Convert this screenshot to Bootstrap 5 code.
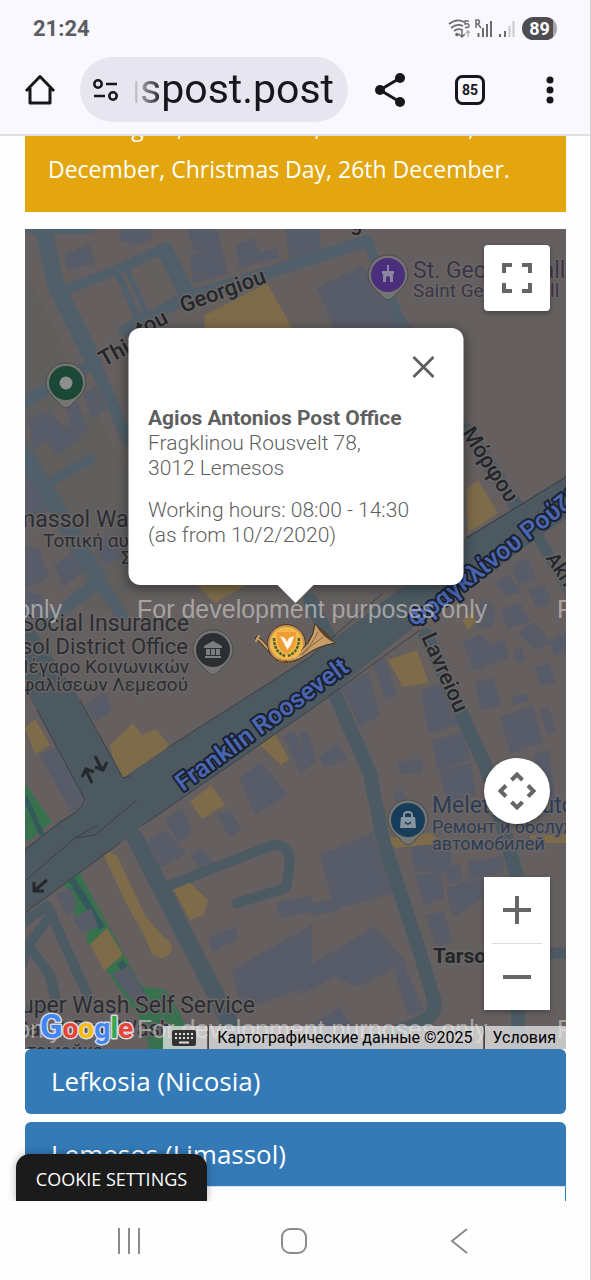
<!DOCTYPE html>
<html lang="en">
<head>
<meta charset="utf-8">
<meta name="viewport" content="width=device-width, initial-scale=1">
<title>Post offices</title>
<link href="https://cdn.jsdelivr.net/npm/bootstrap@5.3.0/dist/css/bootstrap.min.css" rel="stylesheet">
<style>
  body { font-family: "Open Sans", sans-serif; background: #fefefe; }
  .phone { height: 100vh; border-right: 1px solid #d3d3d6; }
  .chrome-top { background: #f9f8fe; border-bottom: 2px solid #e0e0e4; font-family: Roboto, sans-serif; }
  .status-row { height: 57px; padding: 0 33px; color: #5c5c61; font-size: 22px; }
  .battery { width: 35px; height: 23px; font-size: 18px; color: #fff; background: linear-gradient(90deg, #4d4d52 88%, #a5a5aa 88%); }
  .tool-row { height: 77px; }
  .tool-btn { width: 80px; height: 66px; color: #17161c; flex-shrink: 0; }
  .url-pill { height: 65px; background: #e7e5ef; margin-right: 2px; padding: 0 14px 0 12px; min-width: 0; }
  .url-text { font-size: 41px; line-height: 65px; color: #17161c; width: 0; min-width: 0; outline: 0;
    -webkit-mask-image: linear-gradient(90deg, rgba(0,0,0,.15), #000 28px); mask-image: linear-gradient(90deg, rgba(0,0,0,.15), #000 28px); }
  .plain-btn { border: 0; background: none; padding: 0; display: flex; align-items: center; justify-content: center; }
  .page-view { padding: 0 24px 0 25px; min-height: 0; }
  .notice { background: #e3a60f; color: #fff; font-size: 23px; line-height: 42px; padding: 0 23px 22px; margin-bottom: 17px; }
  .notice p { margin-top: -30px; }
  .office-map { height: 820px; background: #655f5f; font-family: Roboto, sans-serif; flex-shrink: 0; }
  .info-window { top: 99px; width: 335px; height: 257px; border-radius: 12px; padding: 78px 20px 20px; color: #5f5f5f;
    font-size: 21px; line-height: 25px; font-weight: 300; box-shadow: 0 3px 12px 1px rgba(0,0,0,.4); }
  .info-window::after { content: ""; position: absolute; left: 50%; bottom: -18px; margin-left: -19px;
    border: solid transparent; border-width: 19px 19px 0; border-top-color: #fff; }
  .info-window p { margin-bottom: 17px; }
  .info-window strong { font-weight: 700; }
  .info-close { top: 19px; right: 20px; width: 40px; height: 40px; }
  .map-ctl { right: 16px; width: 66px; box-shadow: 0 2px 5px rgba(0,0,0,.3); background: #fff; }
  .ctl-full { top: 16px; height: 66px; border-radius: 4px; }
  .ctl-pan { bottom: 225px; height: 66px; }
  .ctl-zoom { bottom: 39px; }
  .ctl-zoom button { height: 66px; }
  .ctl-zoom hr { margin: 0 8px; border-color: #ddd; opacity: 1; }
  .credits { height: 23px; font-size: 16px; line-height: 23px; color: #000; gap: 1px; }
  .credits > * { background: rgba(236,236,236,.72); height: 23px; color: #000; padding: 0 10px 0 8px; }
  .credits > * + * { border-left: 1px solid #444; }
  .glogo { left: 14px; bottom: 2px; }
  .region-btn { height: 65px; font-size: 26px; color: #fff; background: #337ab7; border-radius: 6px; padding: 0 26px; flex-shrink: 0; justify-content: flex-start; }
  .region-btn[aria-expanded] { height: 64px; border-radius: 6px 6px 0 0; }
  .region-body { border: 1px solid #337ab7; min-height: 60px; border-top-color: #cfe0ef; flex-shrink: 0; }
  .cookie-btn { left: 16px; bottom: 0; width: 191px; height: 47px; padding: 3px 0 0; color: #fff; background: #1b1b1b; font-size: 18px; font-weight: 500; white-space: nowrap;
    border-radius: 14px 14px 0 0; box-shadow: 0 0 8px rgba(0,0,0,.3); }
  .sys-nav { height: 79px; padding: 0 49px 0 46px; color: #8b8b8b; }
  .road { fill: none; stroke: #4c5a63; stroke-linejoin: round; stroke-linecap: round; }
  .hi { stroke: #505f69; }
  .bld { fill: #585b68; }
  .shop { fill: #7d6b49; }
  .park { fill: #38714d; }
  .edge { fill: none; stroke: #3b4145; stroke-width: 1; }
  .halo { paint-order: stroke; stroke: #6b6665; stroke-width: 3px; stroke-linejoin: round; }
  .street { font-weight: 500; fill: #23262b; }
  .avenue { font-weight: 600; fill: #4a66b0; stroke: #1b2130; stroke-width: 4px; paint-order: stroke; stroke-linejoin: round; }
  .poi { fill: #2a2e34; }
  .devnote { font-family: "Liberation Sans", sans-serif; font-size: 25px; fill: #b9b7b6; fill-opacity: .8; }
</style>
</head>
<body>
<div class="phone d-flex flex-column overflow-hidden">
  <header class="chrome-top flex-shrink-0">
    <div class="status-row d-flex align-items-center justify-content-between">
      <span class="fw-bold">21:24</span>
      <span class="d-flex align-items-center">
        <svg width="70" height="24" viewBox="448 17 70 24" fill="none" stroke="#6b6b70" stroke-width="1.7">
          <path d="M449 24q8-6 15-2M451 28q6-5 12-2M454 31q4-3 8-1"/><circle cx="457" cy="34.500" r="1" fill="#6b6b70"/>
          <path d="M469 21h-4v3q4-1 4 1.500t-4 2" stroke-width="1.500"/>
          <path d="M462 29v8m-3-3 3 3 3-3" stroke-width="1.500"/><path d="M468 37v-6m-2 2 2-2 2 2" stroke="#aaa" stroke-width="1.300"/>
          <path d="M476 28v-8h2.500q2 2 0 4H476m2 0 3 4" stroke-width="1.500"/>
          <path d="M478.500 33v4M483 28v9M487 24v13M491 21v16" stroke-width="2"/>
          <path d="M500 34v3M505 31v6" stroke-width="2"/><path d="M509.500 26v11M513.500 21v16" stroke="#c9c9cd" stroke-width="2"/>
        </svg>
        <span class="battery rounded-pill fw-bold d-flex align-items-center justify-content-center ms-1">89</span>
      </span>
    </div>
    <div class="tool-row d-flex align-items-start">
      <button class="plain-btn tool-btn" aria-label="Home"><svg width="32" height="34" viewBox="0 0 32 34" fill="none" stroke="currentColor" stroke-width="3"><path d="M2 18 16 3.500 30 18M6 15v15h20V15" stroke-linejoin="round"/></svg></button>
      <div class="url-pill rounded-pill d-flex align-items-center flex-grow-1">
        <svg class="flex-shrink-0 me-3" width="27" height="24" viewBox="0 0 27 24" fill="none" stroke="#17161c" stroke-width="2.500"><circle cx="6" cy="6" r="3.700"/><path d="M14 6h11M2 18h11"/><circle cx="21" cy="18" r="3.700"/></svg>
        <input class="url-text flex-grow-1 border-0 bg-transparent p-0" dir="rtl" aria-label="Address" value="cypruspost.post">
      </div>
      <button class="plain-btn tool-btn" aria-label="Share"><svg width="32" height="36" viewBox="0 0 32 36" fill="currentColor"><path d="M26 6 6 18l20 12" fill="none" stroke="currentColor" stroke-width="3"/><circle cx="26" cy="6" r="5"/><circle cx="6" cy="18" r="5"/><circle cx="26" cy="30" r="5"/></svg></button>
      <button class="plain-btn tool-btn" aria-label="85 tabs"><svg width="32" height="32" viewBox="0 0 32 32"><rect x="2.500" y="2.500" width="27" height="27" rx="6" fill="none" stroke="currentColor" stroke-width="3"/><text x="16" y="21" font-size="14" font-weight="700" text-anchor="middle" fill="currentColor">85</text></svg></button>
      <button class="plain-btn tool-btn" aria-label="Menu"><svg width="10" height="32" viewBox="0 0 10 32" fill="currentColor"><circle cx="5" cy="6" r="3.500"/><circle cx="5" cy="16" r="3.500"/><circle cx="5" cy="26" r="3.500"/></svg></button>
    </div>
  </header>

  <main class="page-view position-relative flex-grow-1 overflow-hidden d-flex flex-column">
    <div class="notice flex-shrink-0"><p class="mb-0">15th August, 1st October, 28th October, 24th December, Christmas Day, 26th December.</p></div>

    <section class="office-map position-relative overflow-hidden">
      <svg class="position-absolute w-100 h-100" viewBox="25 229 541 820" preserveAspectRatio="xMidYMid slice">
        <rect x="-200" y="229" width="1200" height="820" fill="#655f5f"/>
        <path d="M25 275 60 340 75 395 25 430zM25 440l70-30 35 70v120H90L40 490zM70 590l60-20v40H85z" fill="#605f5e"/>
        <!-- buildings -->
        <g class="bld">
          <path d="M64 255l25-11 6 20-28 6zM120 229h32v10l-18 7-14-6zM187 229h30l4 14-27 8zM190 255l30-15 8 34-35 10zM236 245l18-7 5 14 17-4 3 10-40 10zM285 229h35v25l-30 6zM83 393l13-7 10 24-14 8zM28 420l22-10 14 20-30 20zM64 405l14-3 10 30-12 4zM25 470l12 12 10 32-22 10zM45 440l25-15 12 12-25 18zM54 565l22-16 8 20-20 18zM92 545l24-14 14 22-25 12zM25 545l14 4 10 28-24 12zM26 590l16 6 6 22-22 4z"/>
          <path d="M317 288l45-22 22 30 30 32h-80z"/>
          <path d="M85 705l20-14 7 20-18 10zM40 755l18-9 28 58-15 8zM242 775l20-12 26 32-33 20-15-36zM283 735l12-4 14 34-9 8zM165 820l17-12 10 24-14 10zM148 840l18-10 20 24-26 14zM190 855l12-7 12 15-13 9zM218 815l12-5 11 20-12 7z"/>
          <path d="M340 685l28-12 12 42-20 12zM373 662l12-4 12 36-12 6zM422 690l30-10 8 45-32 8zM432 740l33-8 5 28-32 10zM398 762l24-3v14l-22 1zM440 770l32-7 4 32-30 8zM463 642l18-8 8 10 16-4 3 17-34 14zM475 682l18-5 8 28-20 5zM500 717l33-12 10 37-32 12zM512 698l15-5 1 8-15 5zM513 650l8-2 5 12-8 3zM535 667l14-4 7 19-15 4zM519 634l20-8 12 18-15 6zM550 640l16-8v20l-12 4zM540 710l9-2 7 24-9 3zM533 755l16-5 7 50-12 6zM318 757l20-14 9 17-22 8zM300 730l10 6 6 25-12 10zM394 793l9-2 2 9-10 2z"/>
          <path d="M512 565l16-6 8 20-18 6zM495 582l14-7 12 17-14 5zM528 590l16-6 8 18-15 6zM500 610l20-7 10 18-22 8zM480 600l15 5-2 20-15 5zM520 630l14-8 6 12-13 8z"/>
          <path d="M320 855l52-22 22 60-60 16zM310 965l65-38 32 35-50 25-22-10-35 18v-25zM394 970l10-5 20 45-16 6zM411 845l40 2v26l-37-2zM415 875l25-3 5 25-22 8zM445 868l15-4 2 18-14 2zM468 862l35-6 1 16-35 7zM446 888l37-11v20l-30 20zM425 916l18-5 10 30-16 6zM232 970l80-45v60l-70 25zM276 902l36-6v16l-32 6zM208 938l27-11 4 11-26 14zM312 903l25-5 3 12-28 6zM310 1025l30-18 25 40h-50z"/>
        </g>
        <!-- shops and landmarks -->
        <g class="shop">
          <path d="M205 315l62-32 27 48h-90zM466 490l12-10 20 33-30 20zM195 583h55l-35 20zM110 745l23-22 9 12 14-6 18 22-30 25-13-1-12 10zM25 728l10-9 15 26-15 9zM190 802l21-17 14 20-23 14zM260 745l15-11 14 25-8 6zM388 660l29-10 12 33-26 4zM101 850l15 4 30 63 18 20q12 8 6 17-9 8-18 0l-8-19-17-30zM174 890l13-10 21 20-4 15-14 5zM385 838l45-5 15 10-50 5zM530 835h36v8h-36zM462 620l10-8 4 10-8 8z"/>
        </g>
        <path class="park" d="M25 783 52 822 30 840H25zM62 880l18-6 61 112 24 4 8 10 20 42-30 18h-10l-12-40-55-80 3-15-18-14 5-5z"/>
        <path d="M72 880 102 928M120 962l22 32" stroke="#35585c" stroke-width="7"/>
        <path class="shop" d="M90 944l17-16 16 27-19 16z"/>
        <path class="bld" d="M56 895l16-7 5 20-10 7zM73 918l18-10 7 18-15 8zM112 974l16-8 22 36-12 6z"/>
        <path d="M25 797 42 835" stroke="#35585c" stroke-width="5"/>

        <!-- side streets -->
        <path class="road hi" stroke-width="17" d="M42 225 57 288 92 358M20 447 97 577"/>
        <path class="road hi" stroke-width="12" d="M92 358 128 440M96 362 20 404M97 577 122 616M97 582 45 625M125 330 187 297 270 272 367 241"/>
        <path class="road hi" stroke-width="10" d="M63 291 117 270 167 247M53 480 90 459M367 241 404 330M30 229h60"/>
        <path class="road hi" stroke-width="16" d="M122 272 145 322M166 252 185 290"/>
        <path d="M123 272 141 312M150 262 163 297" stroke="#655f5f" stroke-width="4"/>
        <path class="road" stroke-width="14" d="M466 430 518 508M333 690 370 773 383 840 420 953 435 1003Q434 1022 405 1028L360 1049M426 635 487 770 518 880V1049"/>
        <path class="road" stroke-width="11" d="M537 535 570 592M545 953h25"/>
        <path class="road" stroke-width="17" d="M135 838 167 900 220 1003 245 1055"/>
        <path class="road" stroke-width="10" d="M170 885 273 845Q289 845 290 860L286 888 237 903M20 925 47 906 90 1000M52 914 28 945 50 975 57 1005 25 1010M28 947 22 965"/>
        <path class="road" d="M310 600 335 650" stroke-width="14"/>
        <path class="edge" d="M466 538 566 477"/>
        <!-- avenue -->
        <path d="M25 848 60 822 87 803 25 688V615L78 697 123 778 167 748 310 657 467 538 566 477V518L420 622 310 710 143 825 120 843 25 913Z" fill="#4c5961"/>
        <path class="edge" d="M25 850 60 822Q80 812 85 800L37 710M80 700 123 778 130 776M167 748 310 657 383 593M467 538 566 477M25 881 75 838 98 825M75 838 95 835 137 800M25 913 120 843M143 825 310 710 420 630"/>

        <!-- direction arrows -->
        <g fill="none" stroke="#25292d" stroke-width="3"><path d="M92 783 86 770m-4 7 4-8 8 3M95 756l7 14m-7-3 8 3 4-8M47 880 34 891m0-9v9h10"/></g>

        <!-- street names -->
        <g class="street" font-size="22">
          <text class="halo" transform="translate(104 367) rotate(-29)">Thi</text>
          <text class="halo" transform="translate(141 337) rotate(-27)">tou</text>
          <text class="halo" transform="translate(183 313) rotate(-20)">Georgiou</text>
          <text class="halo" transform="translate(461 433) rotate(57)" font-size="22">Μόρφου</text>
          <text class="halo" transform="translate(545 558) rotate(57)" font-size="20">Akritas</text>
          <text class="halo" transform="translate(421 637) rotate(66)" font-size="22">Lavreiou</text>
          <text x="433" y="963" class="halo" font-size="21" font-weight="700">Tarsou</text>
          <text x="350" y="230" class="halo">g</text>
        </g>
        <g class="avenue" font-size="25">
          <text transform="translate(183 792) rotate(-36)">Franklin Roosevelt</text>
          <text transform="translate(416 629) rotate(-38)">Φραγκλίνου Ρούζβελτ</text>
        </g>

        <!-- places -->
        <g class="poi halo" font-size="22">
          <text x="136" y="527" text-anchor="end" font-size="23">massol Wat</text>
          <text x="43" y="547" font-size="19">Τοπική αυτο</text>
          <text x="121" y="564" font-size="19">Συ</text>
          <text x="189" y="631" text-anchor="end" font-size="23">Social Insurance</text>
          <text x="188" y="654" text-anchor="end">Limassol District Office</text>
          <text x="189" y="673" font-size="19" text-anchor="end">Μέγαρο Κοινωνικών</text>
          <text x="188" y="691" font-size="19" text-anchor="end">Ασφαλίσεων Λεμεσού</text>
          <text x="255" y="1013" text-anchor="end" font-size="23">Super Wash Self Service</text>
          <text x="172" y="1036" text-anchor="end">Car &amp; Dog Wash</text>
          <text x="103" y="1057" text-anchor="end" font-size="19">Автомойка</text>
        </g>
        <g font-size="23" fill="#3a3547" class="halo"><text x="413" y="278">St. George Hall</text><text x="413" y="297" font-size="19">Saint George Hall</text></g>
        <g font-size="23" fill="#2c3d58" class="halo"><text x="432" y="813">Meletiou Auto</text><text x="432" y="833" font-size="18">Ремонт и обслуживание</text><text x="432" y="850" font-size="18">автомобилей</text></g>

        <!-- pins -->
        <defs><path id="pin" d="M0-20A20 20 0 0 1 20 0Q20 9 8 19Q3 25 0 25T-8 19Q-20 9-20 0A20 20 0 0 1 0-20Z" fill="#747573" stroke="#4b4b4a"/></defs>
        <g transform="translate(66 383)"><use href="#pin"/><circle r="17" fill="#1c4837"/><circle r="6.500" fill="#8c8f8d"/></g>
        <g transform="translate(388 275)"><use href="#pin"/><circle r="17" fill="#4b2f7d"/><path d="M-6-4h5v-6H1v6h5v3H5V7H-5V-1H-6z" fill="#8b86a0"/><path d="M-2 7V3a2 2 0 0 1 4 0v4z" fill="#4b2f7d"/></g>
        <g transform="translate(213 650)"><use href="#pin"/><circle r="17" fill="#2b2f33"/><path d="M-9-4 0-9 9-4v2H-9zM-8 6H8v2H-8zM-7-1h4v6h-4zM-2-1h4v6h-4zM3-1h4v6H3z" fill="#7c7f80"/></g>
        <g transform="translate(408 820)"><use href="#pin"/><circle r="17" fill="#183d5a"/><path d="M-7-3H7L8 8H-8z" fill="#8795a0"/><path d="M-4-2v-3q0-3 4-3t4 3v3" fill="none" stroke="#8795a0" stroke-width="2"/><path d="M-3 2q3 4 6 0" fill="none" stroke="#183d5a" stroke-width="1.500"/></g>

        <!-- watermark -->
        <g class="devnote">
          <text x="62" y="618" text-anchor="end">For development purposes only</text><text x="137" y="618">For development purposes only</text><text x="557" y="618">For development purposes only</text>
          <text x="62" y="1038" text-anchor="end">For development purposes only</text><text x="137" y="1038">For development purposes only</text><text x="557" y="1038">For development purposes only</text>
        </g>

        <!-- post horn marker -->
        <g stroke-linejoin="round" stroke-linecap="round">
          <path d="M257 638l4 3 9 10 8 8" fill="none" stroke="#4b3418" stroke-width="4"/>
          <path d="M257 638l4 3 9 10 8 8" fill="none" stroke="#c79d69" stroke-width="2"/>
          <path d="M256 641l3-5" stroke="#c79d69" stroke-width="2"/>
          <circle cx="286.500" cy="643.500" r="19" fill="#c0925a" stroke="#4b3418"/>
          <path d="M315 624 335 643Q317 646 304 656 296 662 284 662L290 658Q313 646 315 624Z" fill="#c79d69" stroke="#3f2c16"/>
          <path d="M315 624Q326 630 335 643 323 638 315 624Z" fill="#5a4329"/>
          <path d="M318 632Q312 646 300 655M323 637Q311 645 302 655" fill="none" stroke="#6f512d" stroke-width=".8"/>
          <circle cx="286.500" cy="643.500" r="16.500" fill="#f3b84a"/>
          <path d="M277 632h19v8q-1 10-9.500 14-8.500-4-9.500-14z" fill="#ee9d35"/>
          <path d="M286.500 648 280 636l5 2 2 4 2-4 5-2-3 9-4 5z" fill="#fff6e8"/>
          <path d="M274 638q0 14 11 18M299 638q0 14-11 18" fill="none" stroke="#49632e" stroke-width="2.500" stroke-linecap="butt" stroke-dasharray="3 1"/>
          <path d="M280 659v4M283 660v4M286 660v4M289 660v4M292 659v4" stroke="#8f6835" stroke-width="1"/>
        </g>
      </svg>

      <div class="info-window position-absolute start-50 translate-middle-x bg-white">
        <button class="plain-btn info-close position-absolute" aria-label="Close"><svg width="24" height="24" viewBox="0 0 24 24" stroke="#5f5f5f" stroke-width="2.800"><path d="M2 2l20 20M22 2 2 22"/></svg></button>
        <p><strong>Agios Antonios Post Office</strong><br>Fragklinou Rousvelt 78,<br>3012 Lemesos</p>
        <p class="mb-0">Working hours: 08:00 - 14:30<br>(as from 10/2/2020)</p>
      </div>

      <button class="plain-btn map-ctl ctl-full position-absolute" aria-label="Full screen"><svg width="32" height="32" viewBox="0 0 32 32" fill="none" stroke="#666" stroke-width="4"><path d="M3 11V3h8M21 3h8v8M29 21v8h-8M11 29H3v-8"/></svg></button>
      <button class="plain-btn map-ctl ctl-pan position-absolute rounded-circle" aria-label="Pan"><svg width="40" height="40" viewBox="0 0 40 40" fill="none" stroke="#666" stroke-width="4"><path d="M14.500 9 20 3.500l5.500 5.500M14.500 31 20 36.500l5.500-5.500M9 14.500 3.500 20l5.500 5.500M31 14.500 36.500 20 31 25.500"/></svg></button>
      <div class="map-ctl ctl-zoom position-absolute">
        <button class="plain-btn w-100" aria-label="Zoom in"><svg width="28" height="28" viewBox="0 0 28 28" stroke="#666" stroke-width="4"><path d="M0 14h28M14 0v28"/></svg></button>
        <hr>
        <button class="plain-btn w-100" aria-label="Zoom out"><svg width="28" height="28" viewBox="0 0 28 28" stroke="#666" stroke-width="4"><path d="M0 14h28"/></svg></button>
      </div>

      <svg class="glogo position-absolute" width="100" height="38" viewBox="0 0 100 38" role="img" aria-label="Google" font-size="30" font-weight="700" stroke="#d6dbe2" stroke-width="3" paint-order="stroke" stroke-linejoin="round"><text x="1" y="29"><tspan fill="#4285f4" font-size="33">G</tspan><tspan fill="#ea4335" font-size="28">o</tspan><tspan fill="#fbbc04" font-size="28">o</tspan><tspan fill="#4285f4" font-size="28">g</tspan><tspan fill="#34a853">l</tspan><tspan fill="#ea4335" font-size="28">e</tspan></text></svg>

      <div class="credits position-absolute bottom-0 end-0 d-flex">
        <button class="plain-btn" aria-label="Keyboard shortcuts"><svg width="26" height="16" viewBox="0 0 26 16"><rect x="1" width="24" height="16" rx="2" fill="#333"/><path d="M4 4h18M4 8h18" stroke="#ddd" stroke-width="2" stroke-dasharray="2 2"/><path d="M8 12.500h10" stroke="#ddd" stroke-width="2"/></svg></button>
        <span>Картографические данные ©2025</span>
        <a class="text-decoration-none" href="#">Условия</a>
      </div>
    </section>

    <button class="plain-btn region-btn mb-2">Lefkosia (Nicosia)</button>
    <button class="plain-btn region-btn" aria-expanded="true">Lemesos (Limassol)</button>
    <div class="region-body"></div>
    <button class="plain-btn cookie-btn position-absolute">COOKIE SETTINGS</button>
  </main>

  <nav class="sys-nav d-flex flex-shrink-0 align-items-center" aria-label="System">
    <button class="plain-btn flex-fill" aria-label="Recent apps"><svg width="28" height="28" viewBox="0 0 28 28" stroke="#8b8b8b" stroke-width="2"><path d="M4 1v26M14 1v26M24 1v26"/></svg></button>
    <button class="plain-btn flex-fill" aria-label="Home"><svg width="28" height="28" viewBox="0 0 28 28" fill="none" stroke="#8b8b8b" stroke-width="2"><rect x="2" y="2" width="24" height="24" rx="8"/></svg></button>
    <button class="plain-btn flex-fill" aria-label="Back"><svg width="28" height="28" viewBox="0 0 28 28" fill="none" stroke="#8b8b8b" stroke-width="2"><path d="M22 2 7 14l15 12"/></svg></button>
  </nav>
</div>
<script src="https://cdn.jsdelivr.net/npm/bootstrap@5.3.0/dist/js/bootstrap.bundle.min.js"></script>
</body>
</html>
